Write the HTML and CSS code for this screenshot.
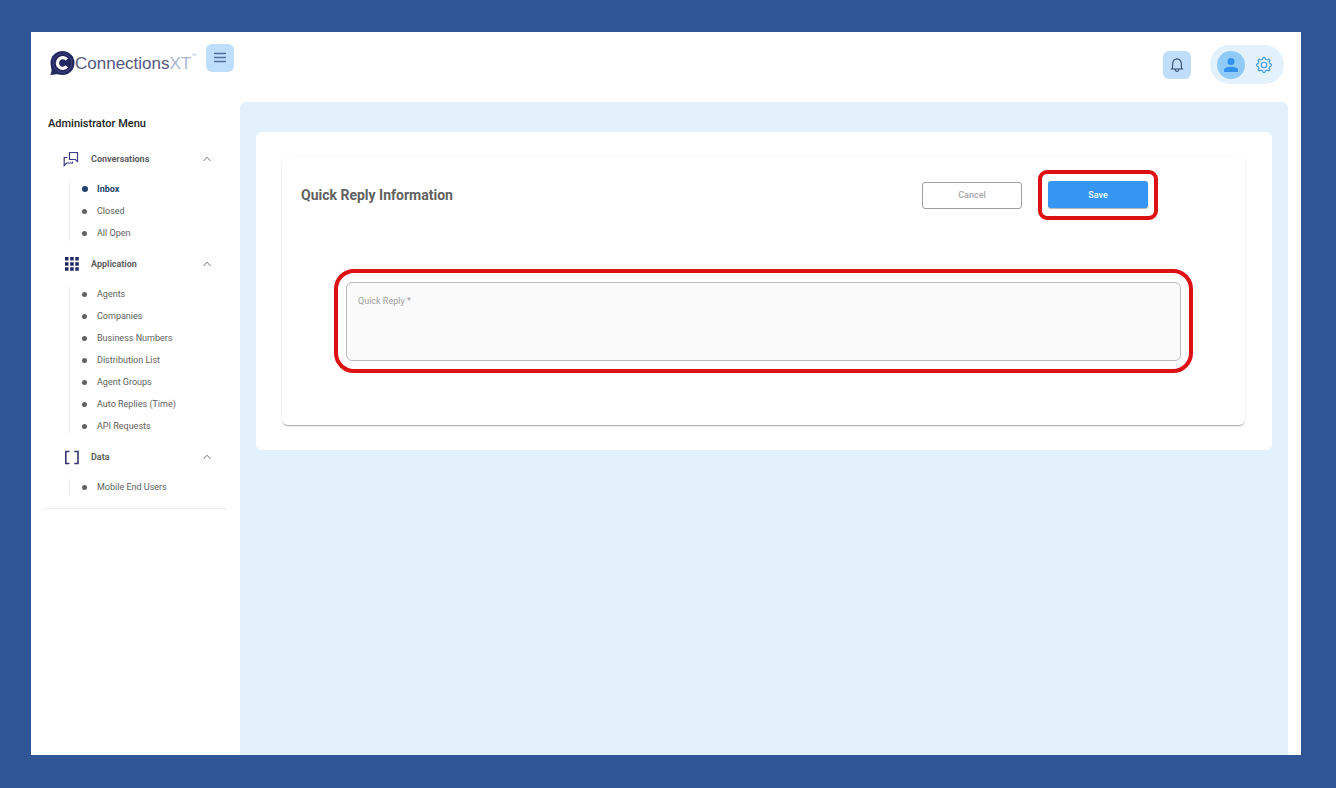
FILE: index.html
```html
<!DOCTYPE html>
<html lang="en">
<head>
<meta charset="utf-8">
<title>ConnectionsXT - Quick Reply Information</title>
<link rel="stylesheet" href="styles.css">
</head>
<body>
<div class="app">
  <header class="topbar">
    <a class="logo" href="#" aria-label="ConnectionsXT">
      <svg class="logo-mark" viewBox="0 0 25 27" aria-hidden="true">
        <circle cx="12.500" cy="13" r="12" fill="#232760"/>
        <path d="M1 15 C2 21 1.500 23 0 25 L9 24 Z" fill="#232760"/>
        <circle cx="12.500" cy="13" r="9.400" fill="none" stroke="#5f6396" stroke-width="0.500"/>
        <path d="M16.800 9.600 A5.300 5.300 0 1 0 16.800 16.400" fill="none" stroke="#fff" stroke-width="3.300"/>
      </svg>
      <span class="logo-text">Connections<span class="logo-xt">XT</span></span><span class="logo-tm">™</span>
    </a>
    <button class="icon-button menu-toggle" type="button" aria-label="Toggle menu">
      <svg width="14" height="12" viewBox="0 0 14 12" aria-hidden="true"><path d="M1 1.500H13M1 5.500H13M1 9.500H13" stroke="#4f6f98" stroke-width="1.300"/></svg>
    </button>
    <div class="topbar-actions">
      <button class="icon-button bell" type="button" aria-label="Notifications">
        <svg width="14" height="16" viewBox="0 0 14 16" fill="none" stroke="#2f4a6d" stroke-width="1.100" aria-hidden="true"><path d="M0.800 12H13.200M2.200 11.800C2.800 10.500 2.600 9 2.700 6.800C2.900 3.800 4.700 2 7 2S11.100 3.800 11.300 6.800C11.400 9 11.200 10.500 11.800 11.800M7 2V1M5 12.500C5.300 15 8.700 15 9 12.500"/></svg>
      </button>
      <button class="profile" type="button" aria-label="Profile settings">
        <span class="avatar">
          <svg width="16" height="16" viewBox="0 0 16 16" fill="#2f90ee" aria-hidden="true"><circle cx="8" cy="4.500" r="3.500"/><path d="M1 15V13C1 10.800 5 9.800 8 9.800S15 10.800 15 13V15Z"/></svg>
        </span>
        <svg width="18" height="18" viewBox="0 0 18 18" fill="none" stroke="#3f9ae6" stroke-width="1.100" stroke-linejoin="round" aria-hidden="true"><circle cx="9" cy="9" r="2.700"/><path d="M7.600 3.200L8 1.600H10L10.400 3.200L12.100 3.900L13.600 3L15 4.400L14.100 5.900L14.800 7.600L16.400 8V10L14.800 10.400L14.100 12.100L15 13.600L13.600 15L12.100 14.100L10.400 14.800L10 16.400H8L7.600 14.800L5.900 14.100L4.400 15L3 13.600L3.900 12.100L3.200 10.400L1.600 10V8L3.200 7.600L3.900 5.900L3 4.400L4.400 3L5.900 3.900Z"/></svg>
      </button>
    </div>
  </header>

  <div class="body">
    <nav class="sidebar" aria-label="Administrator Menu">
      <h2 class="sidebar-title">Administrator Menu</h2>
      <section class="group">
        <button class="group-head" type="button" aria-expanded="true">
          <svg class="group-icon" viewBox="0 0 16 16" fill="none" stroke="#3a3a85" stroke-width="1.200" aria-hidden="true"><path d="M6.500 1.500H14.500V10.500L12.300 8.500H6.500ZM4.500 6.500H1.200V14.500L3.700 12H9.500V10.500"/></svg>
          <span class="group-name">Conversations</span>
          <svg class="chevron" viewBox="0 0 8 6" aria-hidden="true"><path d="M0.500 5L4 1.200L7.500 5"/></svg>
        </button>
        <ul class="items">
          <li><a class="item active" href="#">Inbox</a></li>
          <li><a class="item" href="#">Closed</a></li>
          <li><a class="item" href="#">All Open</a></li>
        </ul>
      </section>
      <section class="group">
        <button class="group-head" type="button" aria-expanded="true">
          <svg class="group-icon" viewBox="0 0 16 16" fill="#232760" aria-hidden="true"><path d="M2 1h3.500v3.500H2zM7.200 1h3.500v3.500H7.200zM12.300 1h3.500v3.500h-3.500zM2 6.200h3.500v3.500H2zM7.200 6.200h3.500v3.500H7.200zM12.300 6.200h3.500v3.500h-3.500zM2 11.300h3.500v3.500H2zM7.200 11.300h3.500v3.500H7.200zM12.300 11.300h3.500v3.500h-3.500z"/></svg>
          <span class="group-name">Application</span>
          <svg class="chevron" viewBox="0 0 8 6" aria-hidden="true"><path d="M0.500 5L4 1.200L7.500 5"/></svg>
        </button>
        <ul class="items">
          <li><a class="item" href="#">Agents</a></li>
          <li><a class="item" href="#">Companies</a></li>
          <li><a class="item" href="#">Business Numbers</a></li>
          <li><a class="item" href="#">Distribution List</a></li>
          <li><a class="item" href="#">Agent Groups</a></li>
          <li><a class="item" href="#">Auto Replies (Time)</a></li>
          <li><a class="item" href="#">API Requests</a></li>
        </ul>
      </section>
      <section class="group">
        <button class="group-head" type="button" aria-expanded="true">
          <svg class="group-icon" viewBox="0 0 16 16" fill="none" stroke="#34386f" stroke-width="1.600" aria-hidden="true"><path d="M6.500 2.500H2.800V14.500H6.500M11.300 2.500H15V14.500H11.300"/></svg>
          <span class="group-name">Data</span>
          <svg class="chevron" viewBox="0 0 8 6" aria-hidden="true"><path d="M0.500 5L4 1.200L7.500 5"/></svg>
        </button>
        <ul class="items">
          <li><a class="item" href="#">Mobile End Users</a></li>
        </ul>
      </section>
      <hr class="sidebar-rule">
    </nav>

    <main class="content">
      <div class="panel">
        <form class="card">
          <div class="card-head">
            <h1 class="card-title">Quick Reply Information</h1>
            <button class="btn cancel" type="button">Cancel</button>
            <div class="highlight highlight-save">
              <button class="btn save" type="button">Save</button>
            </div>
          </div>
          <div class="highlight highlight-field">
            <div class="field">
              <textarea class="reply-input" id="reply" required></textarea>
              <label class="reply-label" for="reply">Quick Reply *</label>
            </div>
          </div>
        </form>
      </div>
    </main>
  </div>
</div>
</body>
</html>
```
FILE: styles.css
```css
* { box-sizing: border-box; }

body {
  margin: 0;
  min-height: 100vh;
  display: flex;
  padding: 32px 35px 33px 31px;
  background: #2f5597;
  font-family: Roboto, "Liberation Sans", sans-serif;
  color: #616161;
}

button { font-family: inherit; cursor: pointer; }
a { text-decoration: none; color: inherit; }

.app {
  flex: 1;
  display: flex;
  flex-direction: column;
  background: #fff;
}

/* Top bar */
.topbar {
  display: flex;
  align-items: flex-start;
  min-height: 70px;
  padding: 12px 17px 0 19px;
}
.logo {
  display: flex;
  align-items: center;
  width: 156px;
  margin-top: 6px;
  font-family: "Liberation Sans", sans-serif;
  color: #54587f;
}
.logo-mark { width: 25px; height: 27px; }
.logo-text { font-size: 17px; line-height: 27px; }
.logo-xt { color: #a9b7d0; }
.logo-tm { align-self: flex-start; font-size: 5px; line-height: 10px; color: #a9b7d0; }
.icon-button {
  display: grid;
  place-items: center;
  width: 28px;
  height: 28px;
  padding: 0;
  border: 0;
  border-radius: 6px;
  background: #bfdefc;
}
.topbar-actions {
  display: flex;
  align-items: center;
  gap: 19px;
  margin-left: auto;
  padding-top: 1px;
}
.profile {
  display: flex;
  align-items: center;
  gap: 10px;
  width: 74px;
  height: 39px;
  padding: 0 0 0 7px;
  border: 0;
  border-radius: 20px;
  background: #e3f1fd;
}
.avatar {
  display: grid;
  place-items: center;
  width: 28px;
  height: 28px;
  border-radius: 50%;
  background: #90caf9;
}

/* Columns */
.body { flex: 1; display: flex; padding-right: 13px; }

/* Side menu */
.sidebar { flex: 0 0 209px; padding: 14px 13px 0; }
.sidebar-title {
  margin: 0 4px 12px;
  font-size: 11px;
  line-height: 16px;
  font-weight: 500;
  color: #212121;
}
.group { margin-bottom: 5px; }
.group-head {
  display: flex;
  align-items: center;
  width: 100%;
  height: 30px;
  padding: 0 16px 0 19px;
  border: 0;
  background: none;
  color: #616161;
}
.group-icon { width: 16px; height: 16px; margin-right: 12px; }
.group-name { font-size: 9px; font-weight: 700; }
.chevron {
  width: 8px;
  height: 6px;
  margin-left: auto;
  fill: none;
  stroke: #757575;
}
.items {
  position: relative;
  margin: 4px 0 0 25px;
  padding: 0;
  list-style: none;
}
.items::before {
  content: "";
  position: absolute;
  top: 3px;
  bottom: 3px;
  left: 0;
  width: 1px;
  background: #f0f0f0;
}
.item {
  display: flex;
  align-items: center;
  gap: 10px;
  height: 22px;
  padding-left: 13px;
  font-size: 9px;
}
.item::before {
  content: "";
  width: 5px;
  height: 5px;
  border-radius: 50%;
  background: #616161;
}
.item.active { font-weight: 700; color: #21426b; gap: 9px; }
.item.active::before { width: 6px; height: 6px; background: #21426b; }
.sidebar-rule { margin: 10px 0 0; border: 0; border-top: 1px solid #ededed; }

/* Page content */
.content {
  flex: 1;
  padding: 30px 16px;
  border-radius: 6px 6px 0 0;
  background: #e3f1fd;
}
.panel { padding: 25px 27px 25px 26px; border-radius: 6px; background: #fff; }
.card {
  padding: 13px 52px 52px;
  border-radius: 6px;
  background: #fff;
  box-shadow: 0 2px 1px -1px rgba(0, 0, 0, .2), 0 1px 1px rgba(0, 0, 0, .1), 0 1px 3px rgba(0, 0, 0, .1);
}
.card-head {
  display: flex;
  align-items: center;
  margin: 0 35px 49px -33px;
}
.card-title {
  margin: 0 auto 0 0;
  font-size: 14px;
  line-height: 20px;
  font-weight: 700;
}
.btn {
  display: block;
  width: 100px;
  height: 27px;
  padding: 0;
  border-radius: 3px;
  font-size: 9px;
  font-weight: 500;
}
.cancel {
  margin-right: 16px;
  border: 1px solid #9e9e9e;
  background: #fff;
  color: #aaaaaa;
}
.save {
  border: 0;
  background: #3595f3;
  color: #fff;
  box-shadow: 0 1px 1px rgba(0, 0, 0, .3);
}
.highlight { border: 4px solid #dd1013; }
.highlight-save { padding: 7px 6px 8px; border-radius: 9px; }
.highlight-field { padding: 9px 8px 8px; border-radius: 20px; }
.field { position: relative; }
.reply-input {
  display: block;
  width: 100%;
  height: 79px;
  padding: 24px 11px 8px;
  border: 1px solid #b9bcbd;
  border-radius: 6px;
  resize: none;
  background: #fafafa;
  font: 9px Roboto, sans-serif;
}
.reply-label {
  position: absolute;
  top: 13px;
  left: 12px;
  font-size: 9px;
  line-height: 12px;
  color: #9e9e9e;
}
```
